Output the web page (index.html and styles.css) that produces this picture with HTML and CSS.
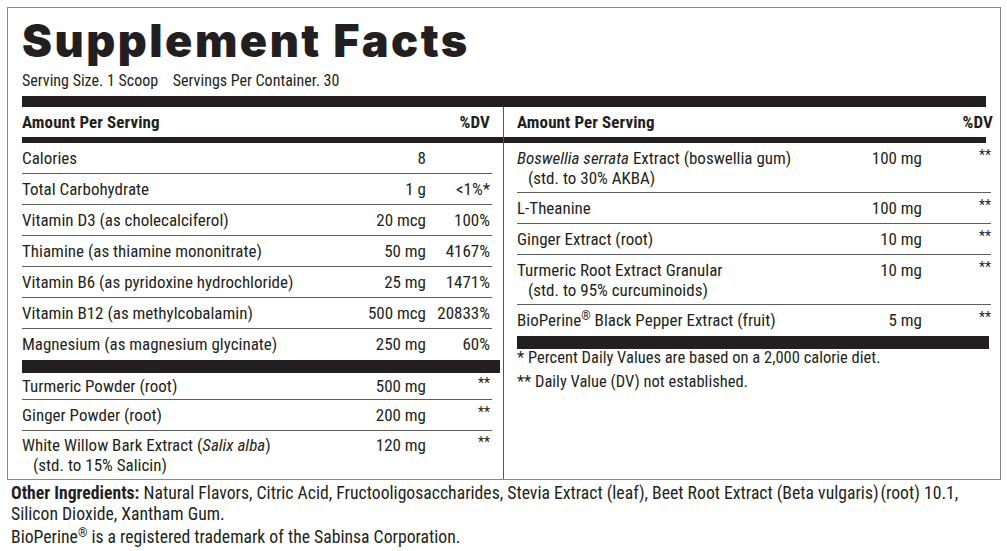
FILE: index.html
```html
<!DOCTYPE html>
<html>
<head>
<meta charset="utf-8">
<link rel="stylesheet" href="styles.css">
</head>
<body>
<div class="label">
  <h1 class="title">Supplement Facts</h1>
  <p class="serving">Serving Size. 1 Scoop&nbsp;&nbsp;&nbsp; Servings Per Container. 30</p>
  <div class="bar bar-top"></div>
  <div class="cols">
    <section class="col col-left">
      <div class="head"><span>Amount Per Serving</span><span>%DV</span></div>
      <div class="bar bar-mid"></div>
      <div class="row"><span class="name">Calories</span><span class="amt">8</span><span class="dv"></span></div>
      <div class="row"><span class="name">Total Carbohydrate</span><span class="amt">1 g</span><span class="dv">&lt;1%*</span></div>
      <div class="row"><span class="name">Vitamin D3 (as cholecalciferol)</span><span class="amt">20 mcg</span><span class="dv">100%</span></div>
      <div class="row"><span class="name">Thiamine (as thiamine mononitrate)</span><span class="amt">50 mg</span><span class="dv">4167%</span></div>
      <div class="row"><span class="name">Vitamin B6 (as pyridoxine hydrochloride)</span><span class="amt">25 mg</span><span class="dv">1471%</span></div>
      <div class="row"><span class="name">Vitamin B12 (as methylcobalamin)</span><span class="amt">500 mcg</span><span class="dv">20833%</span></div>
      <div class="row row-last"><span class="name">Magnesium (as magnesium glycinate)</span><span class="amt">250 mg</span><span class="dv">60%</span></div>
      <div class="bar bar-thick"></div>
      <div class="row row-tight"><span class="name">Turmeric Powder (root)</span><span class="amt">500 mg</span><span class="dv star">**</span></div>
      <div class="row"><span class="name">Ginger Powder (root)</span><span class="amt">200 mg</span><span class="dv star">**</span></div>
      <div class="row row-two row-end"><span class="name">White Willow Bark Extract (<i>Salix alba</i>)<br><span class="sub">(std. to 15% Salicin)</span></span><span class="amt">120 mg</span><span class="dv star">**</span></div>
    </section>
    <section class="col col-right">
      <div class="head"><span>Amount Per Serving</span><span>%DV</span></div>
      <div class="bar bar-mid"></div>
      <div class="row row-two"><span class="name"><i>Boswellia serrata</i> Extract (boswellia gum)<br><span class="sub">(std. to 30% AKBA)</span></span><span class="amt">100 mg</span><span class="dv star">**</span></div>
      <div class="row"><span class="name">L-Theanine</span><span class="amt">100 mg</span><span class="dv star">**</span></div>
      <div class="row"><span class="name">Ginger Extract (root)</span><span class="amt">10 mg</span><span class="dv star">**</span></div>
      <div class="row row-two"><span class="name">Turmeric Root Extract Granular<br><span class="sub">(std. to 95% curcuminoids)</span></span><span class="amt">10 mg</span><span class="dv star">**</span></div>
      <div class="row row-last"><span class="name">BioPerine<sup>®</sup> Black Pepper Extract (fruit)</span><span class="amt">5 mg</span><span class="dv star">**</span></div>
      <div class="bar bar-thick"></div>
      <p class="note">* Percent Daily Values are based on a 2,000 calorie diet.</p>
      <p class="note note-2">** Daily Value (DV) not established.</p>
    </section>
  </div>
</div>
<div class="other">
  <p><b>Other Ingredients:</b> Natural Flavors, Citric Acid, Fructooligosaccharides, Stevia Extract (leaf), Beet Root Extract (Beta vulgaris)&#8202;(root) 10.1,<br>Silicon Dioxide, Xantham Gum.</p>
  <p class="tm">BioPerine<sup>®</sup> is a registered trademark of the Sabinsa Corporation.</p>
</div>
</body>
</html>
```
FILE: styles.css
```css
* { box-sizing: border-box; }

body {
  margin: 0;
  background: #ffffff;
  color: #231f20;
  font-family: "Roboto Condensed", "DejaVu Sans Condensed", sans-serif;
  font-size: 17px;
}

.label {
  margin: 7px 0 0 7px;
  width: 994px;
  height: 473px;
  border: 1px solid #8a8a8a;
  padding: 8px 14px 0 14px;
  display: flex;
  flex-direction: column;
  overflow: hidden;
}

.title {
  margin: 0;
  font-family: Inter, "Liberation Sans", sans-serif;
  font-weight: 900;
  font-size: 45px;
  line-height: 50px;
  letter-spacing: 2.5px;
}

.serving {
  margin: 4px 0 0;
  font-size: 16px;
  line-height: 22px;
}

.bar { background: #231f20; }
.bar-top { height: 11px; margin-top: 4px; }
.bar-mid { height: 6px; }
.bar-thick { height: 13px; }

.cols {
  flex: 1;
  display: grid;
  grid-template-columns: 481px 1fr;
}

.col { display: flex; flex-direction: column; }

.col-right {
  border-left: 1px solid #555;
  padding-left: 13px;
  margin-right: -5px;
}

.head {
  display: flex;
  justify-content: space-between;
  font-weight: 700;
  font-size: 17px;
  letter-spacing: 0.1px;
  height: 30px;
  padding-top: 5px;
  line-height: 20px;
}

.col-left .head { margin-right: 11px; padding-right: 2px; }
.col-right .head { margin-right: -2px; }
.col-right .bar-mid { margin-left: -13px; margin-right: 5px; }
.col-left .bar-thick { margin-right: 3px; }
.col-right .bar-thick { margin-right: 2px; }

.row {
  display: grid;
  grid-template-columns: 1fr 110px 64px;
  padding: 5px 2px 4px 0;
  line-height: 21px;
  border-bottom: 1px solid #5e5e5e;
}

.col-left .row { margin-right: 11px; }
.col-right .row { grid-template-columns: 1fr 110px 69px; padding-right: 0; }

.row-last { border-bottom: none; padding-bottom: 5px; }
.row-tight { padding-top: 3px; padding-bottom: 2px; }
.row-two { line-height: 20px; padding-bottom: 4px; }
.row-end { border-bottom: none; padding-top: 4px; }

.amt, .dv { text-align: right; white-space: nowrap; }

.star {
  font-size: 14px;
  line-height: 14px;
}

.sub { padding-left: 11px; }

sup {
  font-size: 12px;
  line-height: 0;
  vertical-align: 6px;
}

.note {
  margin: 0;
  font-size: 16.5px;
  line-height: 18px;
}

.note-2 { margin-top: 6px; }

.other {
  margin-left: 11px;
  padding-top: 3px;
  font-size: 17.7px;
  line-height: 20.5px;
}

.other p { margin: 0; }
.other .tm { margin-top: 3px; }
```
